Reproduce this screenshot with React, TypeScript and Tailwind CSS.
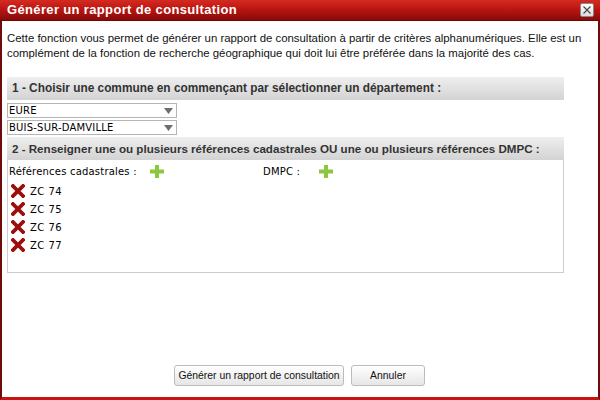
import React from "react";

const Plus = () => (
  <svg width="14" height="13" viewBox="0 0 14 13" className="block">
    <rect x="5" y="0" width="4" height="13" fill="#8dc63f" />
    <rect x="0" y="4.5" width="14" height="4" fill="#8dc63f" />
  </svg>
);

const Cross = () => (
  <svg width="14" height="14" viewBox="0 0 14 14" className="block">
    <path d="M2 2 L12 12 M12 2 L2 12" stroke="#9c0d0d" strokeWidth="3.8" strokeLinecap="square" />
  </svg>
);

const Select = ({ value }: { value: string }) => (
  <div className="flex h-[15px] w-[170px] items-center justify-between border border-[#b5b5b5] bg-white pl-[1px] pr-[3px]">
    <span className="text-[10px] leading-none tracking-[0.2px] text-black" style={{ fontFamily: "'DejaVu Sans', sans-serif" }}>
      {value}
    </span>
    <svg width="9" height="6" viewBox="0 0 9 6" className="block">
      <path d="M0 0 H9 L4.5 6 Z" fill="#6f6f6f" />
    </svg>
  </div>
);

const SectionHeader = ({ children, size }: { children: React.ReactNode; size: string }) => (
  <div
    className={`flex h-[23px] w-[557px] items-center bg-gradient-to-b from-[#efefef] to-[#d3d3d3] pl-[5px] font-bold text-[#333] ${size}`}
    style={{ fontFamily: "'Liberation Sans', Arial, sans-serif" }}
  >
    {children}
  </div>
);

export default function App() {
  const refs = ["ZC 74", "ZC 75", "ZC 76", "ZC 77"];
  return (
    <div className="flex h-[400px] w-[600px] flex-col bg-white" style={{ fontFamily: "'Liberation Sans', Arial, sans-serif" }}>
      <div className="flex h-[21px] shrink-0 items-center justify-between border-b border-[#6a0808] bg-gradient-to-b from-[#d52a22] via-[#b8140f] to-[#870b0b] pl-[7px] pr-[6px]">
        <span className="text-[13px] font-bold tracking-[0.35px] text-white">Générer un rapport de consultation</span>
        <div className="flex h-[14px] w-[14px] items-center justify-center rounded-[2px] border border-[#8a8a8a] bg-gradient-to-b from-[#ffffff] to-[#dcdcdc]">
          <svg width="8" height="8" viewBox="0 0 8 8" className="block">
            <path d="M0.5 0.5 L7.5 7.5 M7.5 0.5 L0.5 7.5" stroke="#444" strokeWidth="1.1" />
          </svg>
        </div>
      </div>
      <div className="flex flex-1 flex-col border-x-2 border-b-[3px] border-x-[#6e0b0b] border-b-[#c81313] px-[5px]">
        <p className="mt-[10px] whitespace-nowrap text-[11.4px] leading-[15px] text-[#111]">
          Cette fonction vous permet de générer un rapport de consultation à partir de critères alphanumériques. Elle est un
          <br />
          complément de la fonction de recherche géographique qui doit lui être préférée dans la majorité des cas.
        </p>
        <div className="mt-[16px]">
          <SectionHeader size="text-[11.85px]">1 - Choisir une commune en commençant par sélectionner un département :</SectionHeader>
        </div>
        <div className="mt-[3px] flex flex-col gap-[2px]">
          <Select value="EURE" />
          <Select value="BUIS-SUR-DAMVILLE" />
        </div>
        <div className="mt-[2px]">
          <SectionHeader size="text-[11.6px]">2 - Renseigner une ou plusieurs références cadastrales OU une ou plusieurs références DMPC :</SectionHeader>
        </div>
        <div className="h-[113px] w-[557px] border border-t-0 border-[#cccccc] bg-white pl-[1px]" style={{ fontFamily: "'DejaVu Sans', sans-serif" }}>
          <div className="mt-[5px] flex h-[13px] items-center text-[10px] tracking-[0.2px] text-black">
            <span className="w-[141px]">Références cadastrales :</span>
            <Plus />
            <span className="ml-[99px] w-[56px]">DMPC :</span>
            <Plus />
          </div>
          <div className="mt-[4px] flex flex-col">
            {refs.map((r) => (
              <div key={r} className="flex h-[18px] items-center">
                <span className="ml-[2px]">
                  <Cross />
                </span>
                <span className="ml-[5px] text-[10px] tracking-[0.5px] text-black">{r}</span>
              </div>
            ))}
          </div>
        </div>
        <div className="flex-1" />
        <div className="mb-[11px] flex gap-[7px] pl-[167px]">
          <button className="h-[21px] w-[170px] whitespace-nowrap rounded-[3px] border border-[#bcbcbc] bg-gradient-to-b from-[#ffffff] to-[#e6e6e6] text-[10.4px] text-[#111]">
            Générer un rapport de consultation
          </button>
          <button className="h-[21px] w-[74px] rounded-[3px] border border-[#bcbcbc] bg-gradient-to-b from-[#ffffff] to-[#e6e6e6] text-[10.4px] text-[#111]">
            Annuler
          </button>
        </div>
      </div>
    </div>
  );
}
